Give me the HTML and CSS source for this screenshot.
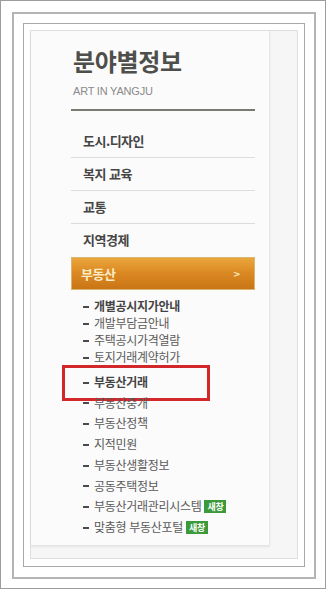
FILE: index.html
```html
<!DOCTYPE html>
<html lang="ko">
<head>
<meta charset="utf-8">
<link rel="stylesheet" href="styles.css">
</head>
<body>
<div class="frame1">
  <div class="frame2">
    <div class="frame3">
      <div class="frame4">
        <div class="panel">
          <h1 class="title">분야별정보</h1>
          <p class="subtitle">ART IN YANGJU</p>
          <div class="divider"></div>
          <ul class="menu">
            <li class="menu-item">도시.디자인</li>
            <li class="menu-item">복지 교육</li>
            <li class="menu-item">교통</li>
            <li class="menu-item last">지역경제</li>
          </ul>
          <div class="active-bar"><span>부동산</span><span class="chev">&gt;</span></div>
          <ul class="sub group1">
            <li class="strong"><span class="dash"></span>개별공시지가안내</li>
            <li><span class="dash"></span>개발부담금안내</li>
            <li><span class="dash"></span>주택공시가격열람</li>
            <li><span class="dash"></span>토지거래계약허가</li>
          </ul>
          <ul class="sub group2">
            <li class="strong current"><span class="dash"></span>부동산거래<span class="highlight"></span></li>
            <li><span class="dash"></span>부동산중개</li>
            <li><span class="dash"></span>부동산정책</li>
            <li><span class="dash"></span>지적민원</li>
            <li><span class="dash"></span>부동산생활정보</li>
            <li><span class="dash"></span>공동주택정보</li>
            <li><span class="dash"></span>부동산거래관리시스템 <span class="badge">새창</span></li>
            <li><span class="dash"></span>맞춤형 부동산포털 <span class="badge">새창</span></li>
          </ul>
        </div>
      </div>
    </div>
  </div>
</div>
</body>
</html>
```
FILE: styles.css
```css
* { box-sizing: border-box; }
html, body { margin: 0; padding: 0; background: #fff; }
body {
  width: 327px;
  height: 590px;
  font-family: "Noto Sans CJK KR", "Noto Sans", sans-serif;
  overflow: hidden;
}
.frame1 {
  width: 326px;
  height: 589px;
  border: 1px solid #9c9c9c;
  padding: 11px;
}
.frame2 {
  width: 304px;
  height: 567px;
  border: 2px solid #b4b4b4;
  padding: 9px;
}
.frame3 {
  width: 282px;
  height: 544px;
  border: 1px solid #a9a9a9;
  padding: 6px;
}
.frame4 {
  width: 268px;
  height: 529px;
  border: 1px solid #dedede;
  background: #f6f6f6;
}
.panel {
  position: relative;
  width: 239px;
  height: 514px;
  background: #fbfbfb;
  border-right: 1px solid #e6e6e6;
  box-shadow: 0 2px 2px rgba(0,0,0,0.08);
  padding: 16px 14px 0 40px;
}
.title {
  margin: 0;
  font-size: 24px;
  line-height: 28px;
  font-weight: 700;
  color: #4e4e4a;
  letter-spacing: -0.3px;
  padding-left: 2px;
}
.subtitle {
  margin: 9px 0 0 2px;
  font-family: "Liberation Sans", Arial, sans-serif;
  font-size: 11px;
  line-height: 14px;
  color: #8a8a8a;
  letter-spacing: -0.2px;
}
.divider {
  margin-top: 11px;
  height: 2px;
  background: #7a7a72;
}
.menu {
  list-style: none;
  margin: 14px 0 0 0;
  padding: 0;
}
.menu-item {
  height: 33px;
  line-height: 32px;
  border-bottom: 1px solid #dcdcdc;
  padding-left: 12px;
  font-size: 13px;
  font-weight: 700;
  color: #454545;
  letter-spacing: -0.5px;
}
.menu-item.last { border-bottom: none; height: 32px; }
.active-bar {
  display: flex;
  justify-content: space-between;
  align-items: center;
  height: 33px;
  margin-top: 1px;
  padding: 0 14px 0 9px;
  background: linear-gradient(to bottom, #eaa63c 0%, #dc8a24 45%, #c97516 100%);
  border: 1px solid #d9b770;
  color: #fbecc4;
  font-size: 13px;
  font-weight: 700;
  letter-spacing: -0.5px;
}
.active-bar .chev {
  font-family: "DejaVu Sans", sans-serif;
  font-size: 9px;
  font-weight: 700;
}
.sub {
  list-style: none;
  margin: 0;
  padding: 0 0 0 12px;
  font-size: 12px;
  color: #5a5a5a;
  letter-spacing: -0.3px;
}
.group1 { margin-top: 7px; line-height: 17px; }
.group2 { margin-top: 7px; line-height: 20.7px; }
.sub li { position: relative; white-space: nowrap; }
.sub .dash {
  display: inline-block;
  vertical-align: middle;
  width: 6px;
  height: 2px;
  background: #4a4a4a;
  margin-right: 5px;
  margin-top: -2px;
}
.sub .strong { font-weight: 700; color: #444; }
.badge {
  display: inline-block;
  vertical-align: 1px;
  background: #3d9a3b;
  color: #fff;
  font-size: 9px;
  line-height: 13px;
  height: 13px;
  padding: 0 3px;
  font-weight: 700;
  letter-spacing: -0.3px;
}
.highlight {
  position: absolute;
  left: -21px;
  top: -7px;
  width: 148px;
  height: 36px;
  border: 3px solid #d2282c;
  background: rgba(251,251,251,0);
}
```
